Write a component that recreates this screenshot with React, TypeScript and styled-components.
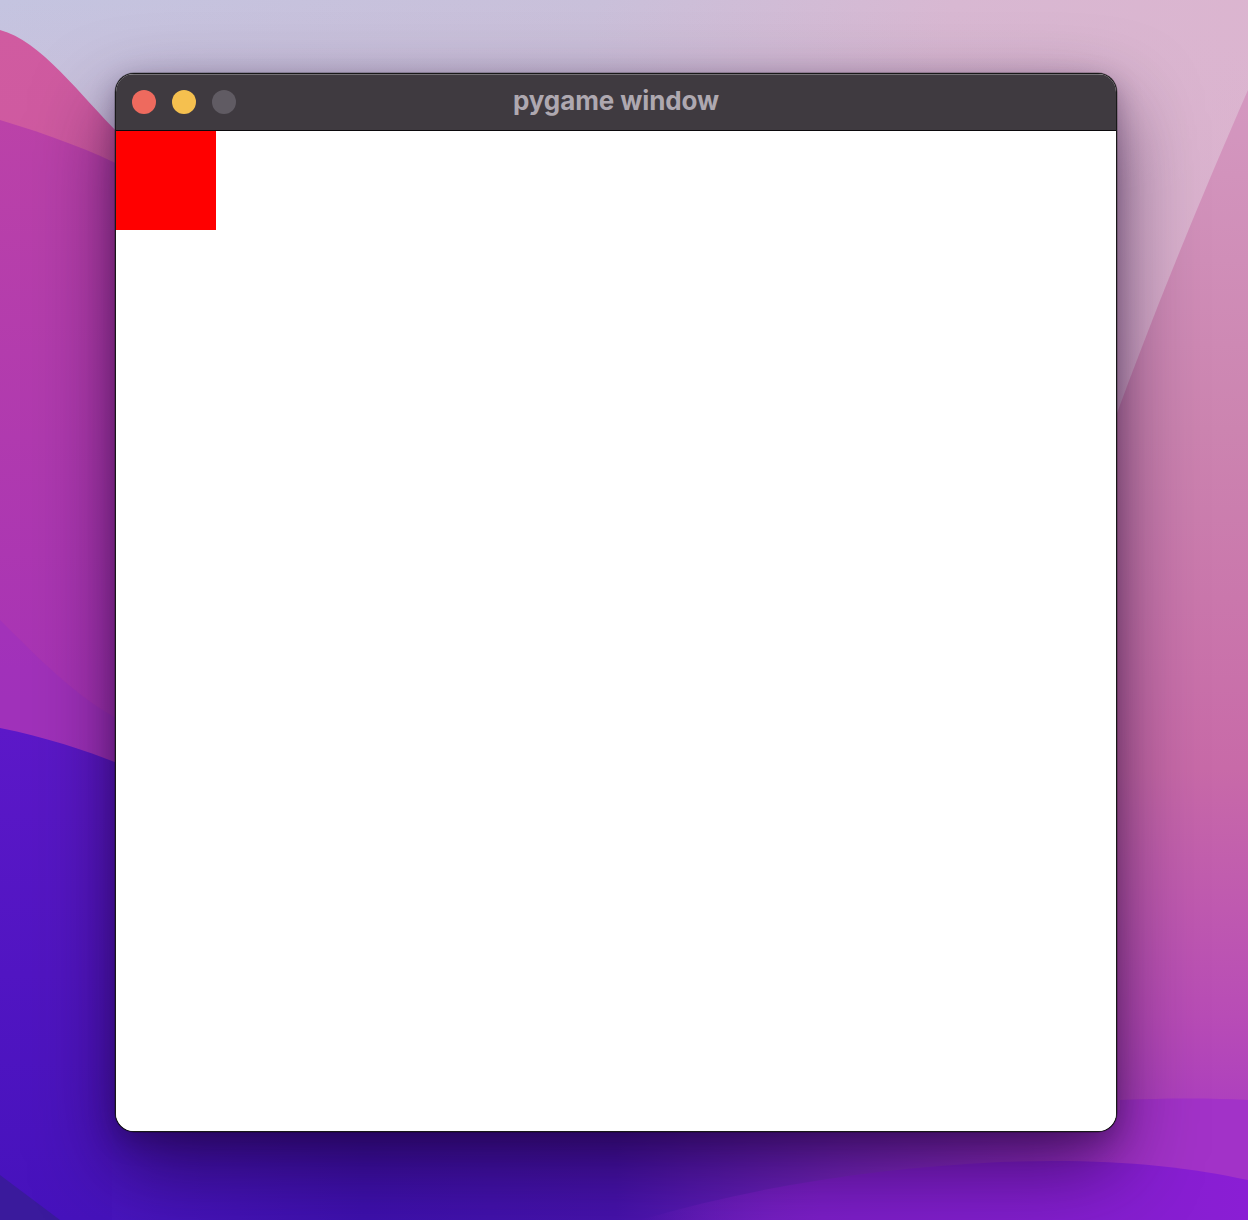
import React from "react";
import styled, { createGlobalStyle } from "styled-components";

const GlobalStyle = createGlobalStyle`
  html, body {
    margin: 0;
    padding: 0;
    width: 1248px;
    height: 1220px;
    overflow: hidden;
    font-family: Inter, "Noto Sans", "Liberation Sans", sans-serif;
  }
`;

const Desktop = styled.div`
  position: relative;
  width: 1248px;
  height: 1220px;
  overflow: hidden;
  display: flex;
  align-items: flex-start;
  justify-content: flex-start;
  padding: 73px 0 0 115px;
  box-sizing: border-box;
`;

const Wallpaper = styled.svg`
  position: absolute;
  inset: 0;
  width: 1248px;
  height: 1220px;
  z-index: 0;
`;

const Window = styled.div`
  position: relative;
  z-index: 1;
  width: 1000px;
  display: flex;
  flex-direction: column;
  border: 1px solid rgba(0, 0, 0, 0.9);
  border-radius: 19px;
  overflow: hidden;
  background: #ffffff;
  box-shadow: 0 0 0 0.5px rgba(0, 0, 0, 0.4), 0 34px 80px rgba(25, 0, 45, 0.6),
    0 8px 26px rgba(25, 0, 45, 0.28);
`;

const TitleBar = styled.div`
  position: relative;
  height: 56px;
  flex: none;
  display: flex;
  align-items: center;
  justify-content: center;
  background: #3f3a40;
  border-bottom: 1px solid #0b090c;
  box-shadow: inset 0 1px 0 rgba(255, 255, 255, 0.28);
`;

const Lights = styled.div`
  position: absolute;
  left: 16px;
  top: 0;
  bottom: 0;
  display: flex;
  align-items: center;
  gap: 16px;
`;

const Light = styled.span<{ $color: string }>`
  width: 24px;
  height: 24px;
  border-radius: 50%;
  background: ${(p) => p.$color};
  display: block;
`;

const Title = styled.span`
  font-family: Inter, "Noto Sans", "Liberation Sans", sans-serif;
  font-weight: 700;
  font-size: 26px;
  letter-spacing: -0.1px;
  color: #aea8b0;
  line-height: 1;
  margin-top: -2px;
`;

const Canvas = styled.div`
  height: 1000px;
  background: #ffffff;
  display: flex;
  align-items: flex-start;
`;

const RedRect = styled.div`
  width: 100px;
  height: 99px;
  background: #ff0000;
`;

export default function App() {
  return (
    <>
      <GlobalStyle />
      <Desktop>
        <Wallpaper viewBox="0 0 1248 1220" preserveAspectRatio="none">
          <defs>
            <linearGradient id="sky" x1="0" y1="0" x2="1" y2="0.25">
              <stop offset="0" stopColor="#c4c4e0" />
              <stop offset="0.45" stopColor="#c9c0da" />
              <stop offset="0.72" stopColor="#d8b8d2" />
              <stop offset="1" stopColor="#dcb4cf" />
            </linearGradient>
            <linearGradient id="skyV" x1="0" y1="0" x2="0" y2="1">
              <stop offset="0" stopColor="#dcb6d0" stopOpacity="0" />
              <stop offset="0.35" stopColor="#d4a2c4" stopOpacity="0.8" />
              <stop offset="1" stopColor="#c86aa8" stopOpacity="1" />
            </linearGradient>
            <linearGradient id="rightPink" x1="0" y1="0" x2="0" y2="1">
              <stop offset="0" stopColor="#d498c0" />
              <stop offset="0.3" stopColor="#cc84b0" />
              <stop offset="0.6" stopColor="#c86aa8" />
              <stop offset="0.82" stopColor="#b84cb6" />
              <stop offset="1" stopColor="#a030c8" />
            </linearGradient>
            <linearGradient id="leftMag" x1="0" y1="0" x2="0" y2="1">
              <stop offset="0" stopColor="#d05ba0" />
              <stop offset="1" stopColor="#c24ca4" />
            </linearGradient>
            <linearGradient id="leftMag2" x1="0" y1="0" x2="0" y2="1">
              <stop offset="0" stopColor="#bb42a8" />
              <stop offset="0.5" stopColor="#a834b4" />
              <stop offset="1" stopColor="#9530c0" />
            </linearGradient>
            <linearGradient id="blue" x1="0" y1="0" x2="0" y2="1">
              <stop offset="0" stopColor="#5c18c8" />
              <stop offset="1" stopColor="#4612bc" />
            </linearGradient>
            <linearGradient id="band" x1="0" y1="0" x2="1" y2="0">
              <stop offset="0" stopColor="#4814be" />
              <stop offset="0.25" stopColor="#3e10ae" />
              <stop offset="0.5" stopColor="#4612ac" />
              <stop offset="0.72" stopColor="#7424bc" />
              <stop offset="1" stopColor="#a232c8" />
            </linearGradient>
            <linearGradient id="bandLow" x1="0" y1="0" x2="1" y2="0">
              <stop offset="0" stopColor="#7a1ec8" stopOpacity="0" />
              <stop offset="0.3" stopColor="#7c1ec8" />
              <stop offset="1" stopColor="#8a1ed4" />
            </linearGradient>
          </defs>
          <rect x="0" y="0" width="1248" height="1220" fill="url(#sky)" />
          <rect x="0" y="0" width="1248" height="1220" fill="url(#skyV)" />
          {/* right pink wave */}
          <path
            d="M1248,90 C1200,200 1150,320 1100,460 L1100,1220 L1248,1220 Z"
            fill="url(#rightPink)"
          />
          {/* left magenta wave */}
          <path
            d="M0,30 C40,40 80,95 120,135 L300,300 L300,1220 L0,1220 Z"
            fill="url(#leftMag)"
          />
          <path
            d="M0,120 C50,135 90,150 130,170 L300,260 L300,1220 L0,1220 Z"
            fill="url(#leftMag2)"
          />
          <path
            d="M0,620 C40,660 80,700 120,720 L300,800 L300,1220 L0,1220 Z"
            fill="#9a2ec0"
            opacity="0.45"
          />
          {/* blue-purple bottom left */}
          <path
            d="M0,728 C50,738 90,752 130,768 L400,900 L400,1220 L0,1220 Z"
            fill="url(#blue)"
          />
          {/* bottom band under the window */}
          <path d="M112,1110 L1120,1110 L1120,1220 L112,1220 Z" fill="url(#band)" />
          <path
            d="M1120,1100 C1170,1098 1210,1098 1248,1100 L1248,1220 L1120,1220 Z"
            fill="#a232c8"
          />
          <path
            d="M640,1220 C760,1185 880,1168 1000,1162 C1100,1158 1180,1165 1248,1180 L1248,1220 Z"
            fill="url(#bandLow)"
          />
          <path d="M0,1175 L60,1220 L0,1220 Z" fill="#3a1a9c" />
        </Wallpaper>
        <Window>
          <TitleBar>
            <Lights>
              <Light $color="#ee6a5e" />
              <Light $color="#f5c04f" />
              <Light $color="#605b63" />
            </Lights>
            <Title>pygame window</Title>
          </TitleBar>
          <Canvas>
            <RedRect />
          </Canvas>
        </Window>
      </Desktop>
    </>
  );
}
